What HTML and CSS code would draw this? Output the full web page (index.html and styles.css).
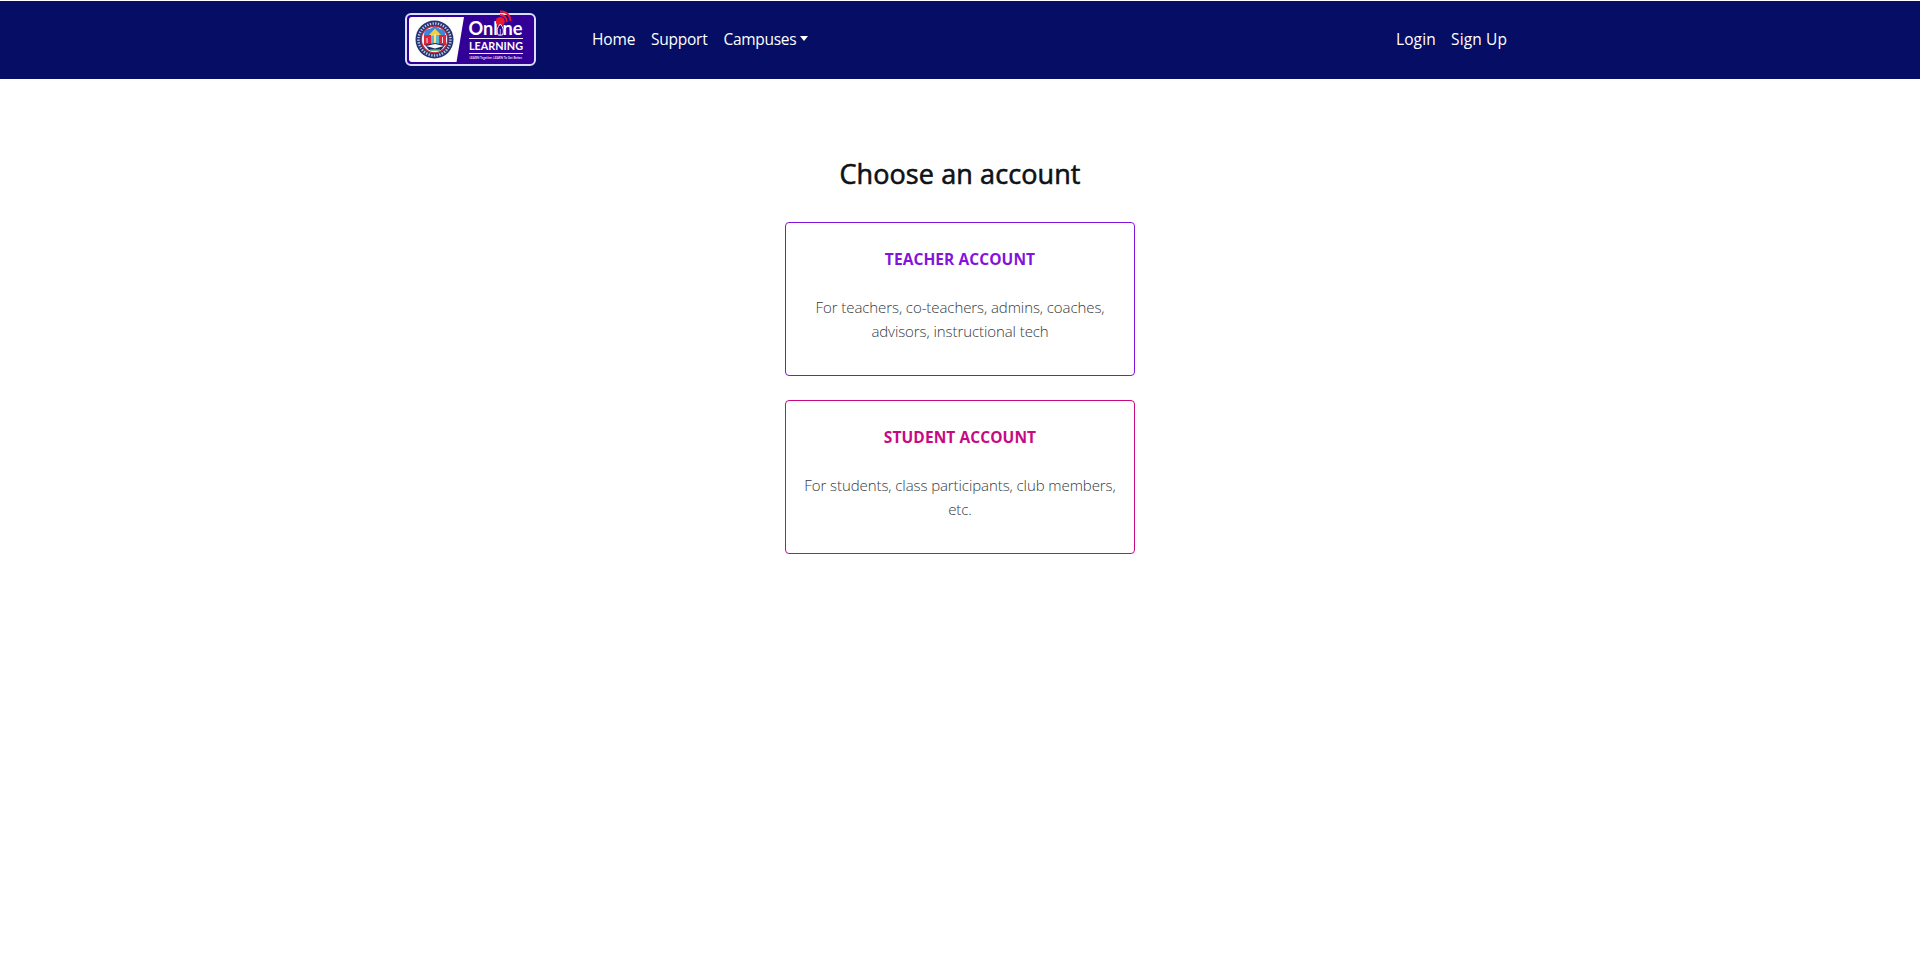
FILE: index.html
```html
<!DOCTYPE html>
<html lang="en">
<head>
<meta charset="utf-8">
<title>Choose an account</title>
<link rel="stylesheet" href="styles.css">
</head>
<body>
<header class="navbar">
  <div class="container">
    <a class="brand" aria-label="Online Learning">
      <svg class="logo" width="132" height="57" viewBox="0 0 132 57">
        <rect x="1" y="3" width="129" height="51" rx="5" fill="#320096" stroke="#dcdcff" stroke-width="2"/>
        <path d="M7 6H59L51.500 51H7Q4 51 4 48V9Q4 6 7 6Z" fill="#fff"/>
        <circle cx="29.500" cy="28.500" r="19" fill="#263574"/>
        <circle cx="29.500" cy="28.500" r="16" fill="none" stroke="#c3cae4" stroke-width="2.500" stroke-dasharray="1.300 1.400"/>
        <circle cx="29.500" cy="28.500" r="13.300" fill="#eceffc" stroke="#c32336" stroke-width="1.300"/>
        <path d="M19 24Q19 17 25 18Q30 13 35 18Q41 18 40 25Z" fill="#3e86dc"/>
        <path d="M24 24L30 17.500L36 24Z" fill="#f5cf42"/>
        <path d="M19 24H26V34H19ZM34 24H41V34H34Z" fill="#e0253a"/>
        <path d="M22 27V32M37.500 26V32" stroke="#f1dce8"/>
        <path d="M26 25H34V34H26Z" fill="#58b6d8"/>
        <path d="M30 23V34" stroke="#ffe278" stroke-width="2"/>
        <path d="M20 34L30 32L40 34L36 39H24Z" fill="#172a61"/>
        <path d="M21 35L30 33L39 35L30 37.500Z" fill="#f5f7ff"/>
        <path d="M25 39H35" stroke="#45ae59" stroke-width="1.500"/>
        <text class="logo-online" x="63.500" y="24" textLength="54" lengthAdjust="spacingAndGlyphs">Online</text>
        <circle cx="95.300" cy="10.500" r="4.500" fill="#e9182d"/>
        <path d="M95 4Q101.500 4 102 11M95 .5Q105 .5 105.500 10" fill="none" stroke="#e9182d" stroke-width="1.800"/>
        <path d="M93 24Q90.500 18 95.300 13Q100 18 97.500 24Z" fill="#320096" stroke="#eee9ff"/>
        <path d="M95.300 18V25" stroke="#b9afe6"/>
        <path d="M64 27.500H118M64 42.500H118" stroke="#eee9ff"/>
        <text class="logo-learning" x="64" y="38.500" textLength="54" lengthAdjust="spacingAndGlyphs">LEARNING</text>
        <text class="logo-tagline" x="64.500" y="48" textLength="53" lengthAdjust="spacingAndGlyphs">LEARN Together. LEARN To Get Better.</text>
      </svg>
    </a>
    <nav class="links">
      <a class="link home">Home</a>
      <a class="link support">Support</a>
      <a class="link campuses">Campuses<span class="caret"></span></a>
    </nav>
    <nav class="links account-links">
      <a class="link login">Login</a>
      <a class="link signup">Sign Up</a>
    </nav>
  </div>
</header>
<main class="chooser">
  <h1 class="title">Choose an account</h1>
  <a class="card teacher">
    <h2 class="card-title">TEACHER ACCOUNT</h2>
    <p class="card-text">For teachers, co-teachers, admins, coaches, advisors, instructional tech</p>
  </a>
  <a class="card student">
    <h2 class="card-title">STUDENT ACCOUNT</h2>
    <p class="card-text">For students, class participants, club members, etc.</p>
  </a>
</main>
</body>
</html>
```
FILE: styles.css
```css
* { box-sizing: border-box; }
body {
  margin: 0;
  padding-top: 1px;
  background: #fff;
  color: #0e1116;
  font: 15px/24px "Open Sans", "Noto Sans", sans-serif;
}
.navbar { height: 78px; background: #050e64; }
.container {
  display: flex;
  align-items: center;
  width: 1110px;
  height: 78px;
  margin: 0 auto;
  padding-bottom: 2px;
}
.brand { width: 179px; height: 57px; }
.logo { display: block; overflow: visible; }
.logo-online { font: 700 18.5px Lato, sans-serif; fill: #fff; }
.logo-learning { font: 700 12px Lato, sans-serif; fill: #fff; }
.logo-tagline { font: 700 4px Lato, sans-serif; fill: #e4dcff; }
.links { display: flex; font-size: 15.5px; }
.account-links { margin-left: auto; }
.link { padding: 0 8px; color: #fff; white-space: nowrap; }
.home { width: 59px; letter-spacing: -0.1px; }
.support { width: 72.5px; letter-spacing: -0.25px; }
.campuses { width: 102px; letter-spacing: -0.3px; }
.login { width: 55px; letter-spacing: 0.1px; }
.signup { width: 72px; letter-spacing: 0.15px; }
.caret {
  display: inline-block;
  margin-left: 4px;
  vertical-align: 4px;
  border-top: 5px solid;
  border-right: 4.8px solid transparent;
  border-left: 4.8px solid transparent;
}
.chooser {
  display: flex;
  flex-direction: column;
  gap: 24px;
  width: 350px;
  margin: 78px auto 0;
}
.title {
  margin: 0 0 7px;
  font-size: 27px;
  font-weight: 400;
  line-height: 34px;
  text-align: center;
  white-space: nowrap;
  letter-spacing: 0.1px;
  -webkit-text-stroke: 0.6px currentColor;
}
.card {
  height: 154px;
  padding: 24px 12px;
  border: 1px solid;
  border-radius: 4px;
  text-align: center;
}
.teacher { color: #8214dc; }
.student { color: #c70a83; }
.card-title {
  margin: 0 0 24px;
  font-size: 15.5px;
  font-weight: 700;
  line-height: 24px;
  letter-spacing: 0.08px;
}
.card-text {
  margin: 0;
  color: #343a40;
  font-weight: 300;
  letter-spacing: -0.08px;
}
```
